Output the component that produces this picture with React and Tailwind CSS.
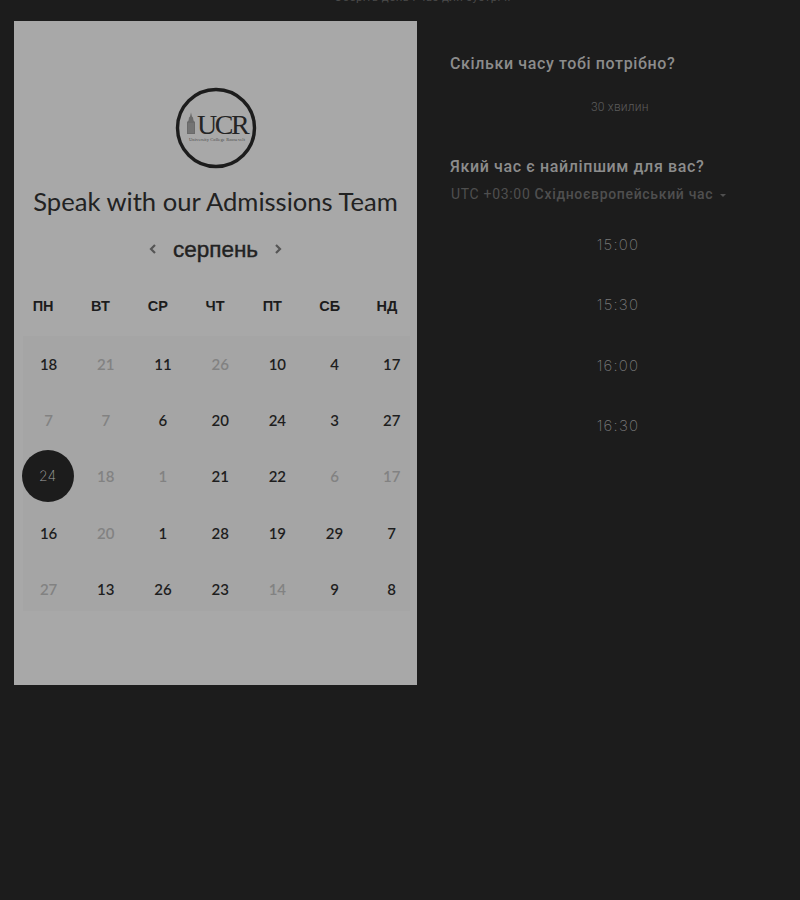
const weekDays = ['ПН', 'ВТ', 'СР', 'ЧТ', 'ПТ', 'СБ', 'НД'];

// n = number, off = greyed out day
const days = [
  { n: 18 }, { n: 21, off: true }, { n: 11 }, { n: 26, off: true }, { n: 10 }, { n: 4 }, { n: 17 },
  { n: 7, off: true }, { n: 7, off: true }, { n: 6 }, { n: 20 }, { n: 24 }, { n: 3 }, { n: 27 },
  { n: 24, selected: true }, { n: 18, off: true }, { n: 1, off: true }, { n: 21 }, { n: 22 }, { n: 6, off: true }, { n: 17, off: true },
  { n: 16 }, { n: 20, off: true }, { n: 1 }, { n: 28 }, { n: 19 }, { n: 29 }, { n: 7 },
  { n: 27, off: true }, { n: 13 }, { n: 26 }, { n: 23 }, { n: 14, off: true }, { n: 9 }, { n: 8 }
];

const times = ['15:00', '15:30', '16:00', '16:30'];

function Logo() {
  return (
    <svg width="82" height="82" viewBox="0 0 82 82" className="block">
      <circle cx="41" cy="41" r="38.5" fill="none" stroke="#1c1c1c" strokeWidth="3.4" />
      <path d="M12 47V35l1.5-1.5.5-3 1-1 .5-2 .5-2 .5 2 .5 2 1 1 .5 3L20 35v12z" fill="#6a6a6a" />
      <path d="M14 36v10M16 36v10M18 36v10" stroke="#8c8c8c" strokeWidth="0.6" />
      <text x="22" y="47" fontFamily="Liberation Serif" fontSize="28" letterSpacing="-2.4" fill="#242424">UCR</text>
      <text x="14" y="54" fontFamily="Liberation Serif" fontSize="4.5" letterSpacing="0.1" fill="#4a4a4a">University College Roosevelt</text>
    </svg>
  );
}

function Calendar() {
  return (
    <div className="flex flex-col items-center w-[403px] h-[664px] bg-[#a8a8a8] pt-[66px] shrink-0">
      <Logo />
      <h1 className="mt-[14px] font-['Lato',sans-serif] text-[25.6px] leading-[36px] text-[#222222] whitespace-nowrap">
        Speak with our Admissions Team
      </h1>
      <div className="mt-[15px] flex items-center h-[32px] font-['Liberation_Sans',sans-serif]">
        <svg width="10" height="12" viewBox="0 0 10 12" className="-mt-[3px]">
          <path d="M7 2 3 6l4 4" fill="none" stroke="#555555" strokeWidth="2.2" />
        </svg>
        <span className="mx-[15px] text-[22.5px] leading-[32px] text-[#222222] [-webkit-text-stroke:0.4px_#222222]">серпень</span>
        <svg width="10" height="12" viewBox="0 0 10 12" className="-mt-[3px]">
          <path d="m3 2 4 4-4 4" fill="none" stroke="#555555" strokeWidth="2.2" />
        </svg>
      </div>
      <div className="mt-[30px] self-start ml-[0.5px] grid grid-cols-[repeat(7,57.3px)] font-['Liberation_Sans',sans-serif] text-[14.5px] font-bold leading-[20px] text-[#1c1c1c]">
        {weekDays.map((d) => (
          <div key={d} className="text-center">{d}</div>
        ))}
      </div>
      <div className="mt-[20px] self-start ml-[9px] w-[387px] h-[275px] bg-[#a5a5a5]">
        <div className="grid grid-cols-[repeat(7,57.2px)] auto-rows-[56.25px] -ml-[3px] w-[401px] font-['Lato',sans-serif] text-[15px] font-semibold">
          {days.map((day, i) => (
            <div key={i} className="flex items-center justify-center">
              {day.selected ? (
                <span className="flex items-center justify-center w-[52px] h-[52px] -ml-[2px] -mt-[2px] rounded-full bg-[#1c1c1c] font-['Inter',sans-serif] text-[14px] font-extralight text-[#a0a0a0]">
                  {day.n}
                </span>
              ) : (
                <span className={day.off ? 'text-[#828282]' : 'text-[#1e1e1e]'}>{day.n}</span>
              )}
            </div>
          ))}
        </div>
      </div>
    </div>
  );
}

function SidePanel() {
  return (
    <div className="ml-[33px] w-[330px] font-['Roboto',sans-serif]">
      <h2 className="mt-[33px] text-[16px] leading-[20px] font-medium tracking-[0.62px] text-[#8c8c8c] whitespace-nowrap">
        Скільки часу тобі потрібно?
      </h2>
      <p className="mt-[25px] ml-[141px] text-[12px] leading-[16px] font-light tracking-[0.2px] text-[#5c5c5c]">30 хвилин</p>
      <h2 className="mt-[42px] text-[16px] leading-[20px] font-medium tracking-[0.62px] text-[#8c8c8c] whitespace-nowrap">
        Який час є найліпшим для вас?
      </h2>
      <div className="mt-[7px] flex items-center text-[14px] leading-[20px] tracking-[0.68px] text-[#4f4f4f] whitespace-nowrap">
        <span className="ml-px">UTC +03:00 <span className="font-medium">Східноєвропейський час</span></span>
        <span className="ml-[7px] mt-[2px] w-0 h-0 border-x-[3px] border-x-transparent border-t-[3px] border-t-[#4f4f4f]" />
      </div>
      <div className="mt-[11px] flex flex-col font-['Inter',sans-serif] text-[15px] font-extralight tracking-[1.2px] text-[#7a7a7a]">
        {times.map((t) => (
          <div key={t} className="h-[60.4px] flex items-center justify-center w-[336px]">{t}</div>
        ))}
      </div>
    </div>
  );
}

export default function App() {
  return (
    <div className="w-[800px] h-[900px] bg-[#1c1c1c] overflow-hidden">
      <div className="h-[21px] overflow-hidden text-center">
        <p className="-mt-[11px] ml-[45px] font-['Roboto',sans-serif] text-[11.5px] leading-[16px] tracking-[0.4px] text-[#4a4a4a]">
          Оберіть день і час для зустрічі
        </p>
      </div>
      <div className="flex pl-[14px]">
        <Calendar />
        <SidePanel />
      </div>
    </div>
  );
}
